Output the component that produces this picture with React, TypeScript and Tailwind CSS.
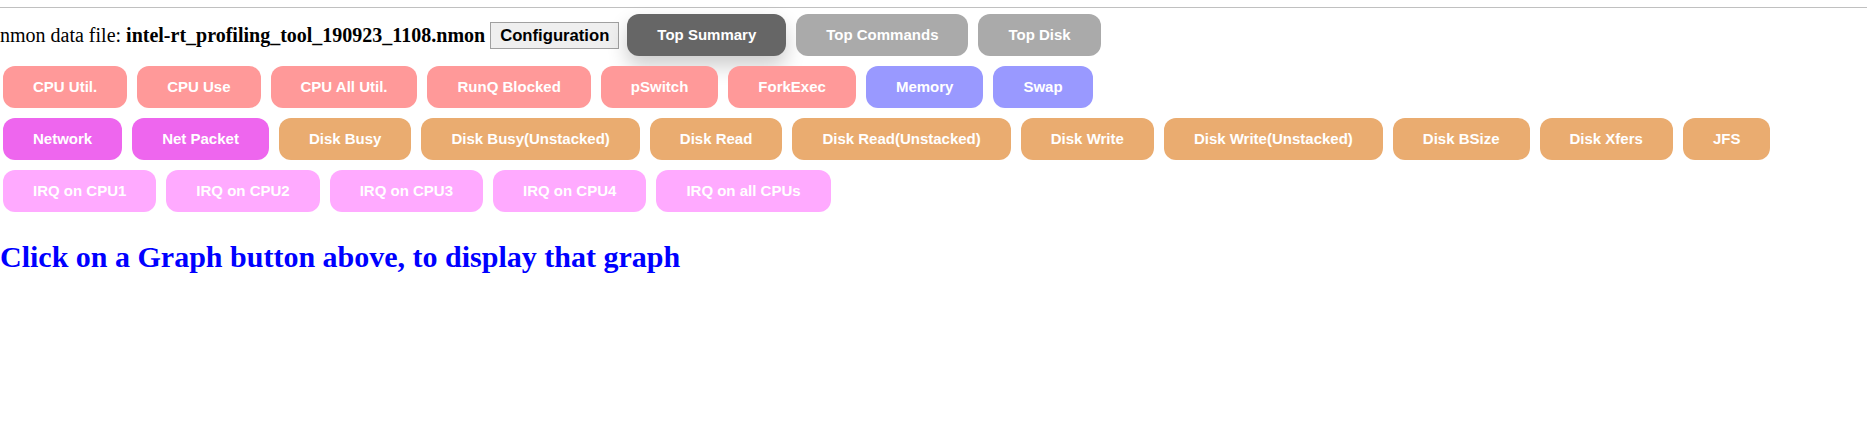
import React from "react";

type Graph = { label: string; color: string };

const cpuRow: Graph[] = [
  { label: "CPU Util.", color: "bg-[#ff9999]" },
  { label: "CPU Use", color: "bg-[#ff9999]" },
  { label: "CPU All Util.", color: "bg-[#ff9999]" },
  { label: "RunQ Blocked", color: "bg-[#ff9999]" },
  { label: "pSwitch", color: "bg-[#ff9999]" },
  { label: "ForkExec", color: "bg-[#ff9999]" },
  { label: "Memory", color: "bg-[#9999ff]" },
  { label: "Swap", color: "bg-[#9999ff]" },
];

const ioRow: Graph[] = [
  { label: "Network", color: "bg-[#ee66ee]" },
  { label: "Net Packet", color: "bg-[#ee66ee]" },
  { label: "Disk Busy", color: "bg-[#eaac70]" },
  { label: "Disk Busy(Unstacked)", color: "bg-[#eaac70]" },
  { label: "Disk Read", color: "bg-[#eaac70]" },
  { label: "Disk Read(Unstacked)", color: "bg-[#eaac70]" },
  { label: "Disk Write", color: "bg-[#eaac70]" },
  { label: "Disk Write(Unstacked)", color: "bg-[#eaac70]" },
  { label: "Disk BSize", color: "bg-[#eaac70]" },
  { label: "Disk Xfers", color: "bg-[#eaac70]" },
  { label: "JFS", color: "bg-[#eaac70]" },
];

const irqRow: Graph[] = [
  { label: "IRQ on CPU1", color: "bg-[#ffaaff]" },
  { label: "IRQ on CPU2", color: "bg-[#ffaaff]" },
  { label: "IRQ on CPU3", color: "bg-[#ffaaff]" },
  { label: "IRQ on CPU4", color: "bg-[#ffaaff]" },
  { label: "IRQ on all CPUs", color: "bg-[#ffaaff]" },
];

function GraphButton({ label, color, extra = "" }: Graph & { extra?: string }) {
  return (
    <button
      className={`${color} ${extra} rounded-[12px] px-[30px] py-[12px] text-[15px] leading-[18px] font-bold text-white whitespace-nowrap font-['Liberation_Sans',Arial,sans-serif]`}
    >
      {label}
    </button>
  );
}

function ButtonRow({ items }: { items: Graph[] }) {
  return (
    <div className="flex gap-[10px] pl-[3px] mt-[10px]">
      {items.map(item => (
        <GraphButton key={item.label} {...item} />
      ))}
    </div>
  );
}

export default function App() {
  return (
    <div className="w-[1867px] h-[442px] bg-white text-black font-['Liberation_Serif','Times_New_Roman',serif] text-[20px]">
      <div className="pt-[7px]">
        <div className="border-t border-[#c0c0c0]" />
      </div>

      <div className="flex items-center mt-[6px]">
        <span className="whitespace-nowrap leading-[23px]">
          nmon data file: <b>intel-rt_profiling_tool_190923_1108.nmon</b>
        </span>
        <button className="ml-[5px] border border-[#a0a0a0] bg-[#efefef] px-[9px] py-[3px] text-[16.67px] leading-[19px] font-bold text-black font-['Liberation_Sans',Arial,sans-serif]">
          Configuration
        </button>
        <div className="flex gap-[10px] ml-[8px]">
          <GraphButton label="Top Summary" color="bg-[#666666]" extra="shadow-[0_10px_20px_rgba(0,0,0,0.2)]" />
          <GraphButton label="Top Commands" color="bg-[#aaaaaa]" />
          <GraphButton label="Top Disk" color="bg-[#aaaaaa]" />
        </div>
      </div>

      <ButtonRow items={cpuRow} />
      <ButtonRow items={ioRow} />
      <ButtonRow items={irqRow} />

      <h2 className="mt-[28px] text-[30px] font-bold text-[#0000ff] leading-[34px]">
        Click on a Graph button above, to display that graph
      </h2>
    </div>
  );
}
